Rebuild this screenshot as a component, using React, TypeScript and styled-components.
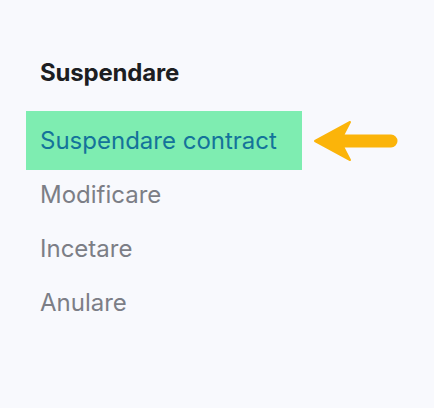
import React from "react";
import styled, { createGlobalStyle } from "styled-components";

const GlobalStyle = createGlobalStyle`
  html, body {
    margin: 0;
    padding: 0;
    background: #f8f9fd;
  }
  body {
    font-family: Inter, "Noto Sans", sans-serif;
  }
`;

const items = ["Modificare", "Incetare", "Anulare"];

export default function App() {
  return (
    <>
      <GlobalStyle />
      <Page>
        <Heading>Suspendare</Heading>
        <ActiveRow>
          <ActiveItem>Suspendare contract</ActiveItem>
          <Arrow width="86" height="42" viewBox="0 0 86 42">
            <path
              d="M2 21 L37 2 L30 15.5 L78 15.5 A5.5 5.5 0 0 1 78 26.5 L30 26.5 L37 40 Z"
              fill="#fbb40a"
              stroke="#fbb40a"
              strokeWidth="2"
              strokeLinejoin="round"
            />
          </Arrow>
        </ActiveRow>
        <List>
          {items.map((item) => (
            <Item key={item}>{item}</Item>
          ))}
        </List>
      </Page>
    </>
  );
}

// Styled Components
const Page = styled.div`
  width: 434px;
  height: 408px;
  box-sizing: border-box;
  padding: 58px 0 0 26px;
`;

const Heading = styled.h2`
  margin: 0 0 0 14px;
  font-size: 24px;
  font-weight: 700;
  color: #1d1e22;
  line-height: 30px;
  letter-spacing: -0.2px;
`;

const ActiveRow = styled.div`
  margin-top: 23px;
  display: flex;
  align-items: center;
  gap: 11px;
`;

const ActiveItem = styled.div`
  width: 276px;
  height: 59px;
  box-sizing: border-box;
  padding-left: 14px;
  display: flex;
  align-items: center;
  background: #7eedb1;
  color: #14739a;
  font-size: 24px;
`;

const Arrow = styled.svg`
  display: block;
`;

const List = styled.div`
  margin-top: -3px;
  display: flex;
  flex-direction: column;
`;

const Item = styled.div`
  height: 54px;
  padding-left: 14px;
  display: flex;
  align-items: center;
  color: #7c7e86;
  font-size: 24px;
`;
